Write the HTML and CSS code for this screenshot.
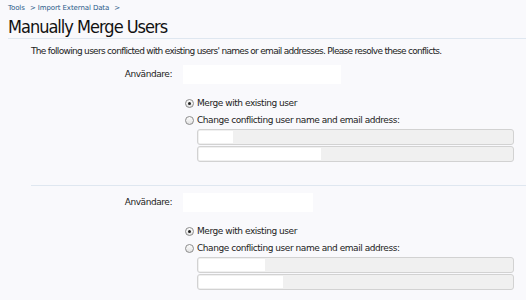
FILE: index.html
```
<!DOCTYPE html>
<html lang="sv">
<head>
  <meta charset="UTF-8" />
  <title>Manually Merge Users</title>
  <link rel="stylesheet" href="styles.css">
</head>
<body>

  <div class="crumbs">
    <a href="#">Tools</a> &gt;
    <a href="#">Import External Data</a> &gt;
  </div>
  <h1 class="title">Manually Merge Users</h1>

  <form class="merge-form">
    <p class="explain">The following users conflicted with existing users' names or email addresses. Please resolve these conflicts.</p>

    <div class="user-block">
      <div class="row">
        <div class="label">Användare:</div>
        <div class="value"><span class="hidden-name" style="width:158px"></span></div>
      </div>
      <ul class="choices">
        <li><label><input type="radio" name="u1" checked> Merge with existing user</label></li>
        <li><label><input type="radio" name="u1"> Change conflicting user name and email address:</label></li>
        <li class="fields">
          <div class="txt"><span class="fill" style="width:34px"></span></div>
          <div class="txt"><span class="fill" style="width:122px"></span></div>
        </li>
      </ul>
    </div>

    <div class="user-block">
      <div class="row">
        <div class="label">Användare:</div>
        <div class="value"><span class="hidden-name" style="width:130px"></span></div>
      </div>
      <ul class="choices">
        <li><label><input type="radio" name="u2" checked> Merge with existing user</label></li>
        <li><label><input type="radio" name="u2"> Change conflicting user name and email address:</label></li>
        <li class="fields">
          <div class="txt"><span class="fill" style="width:66px"></span></div>
          <div class="txt"><span class="fill" style="width:84px"></span></div>
        </li>
      </ul>
    </div>
  </form>

</body>
</html>
```

FILE: styles.css
```
body {
  margin: 0;
  background: #f9f9fc;
  color: #222;
  font-family: "DejaVu Sans", Verdana, sans-serif;
  font-size: 9px;
  letter-spacing: -0.45px;
}
.crumbs {
  padding: 4px 8px 0;
  height: 10px;
  font-size: 7px;
  color: #2b5a8a;
  letter-spacing: -0.1px;
}
.crumbs a {
  color: #2b5a8a;
  text-decoration: none;
  margin-right: 3px;
}
.title {
  margin: 0 0 0 8px;
  font-family: "DejaVu Sans Condensed", "DejaVu Sans", sans-serif;
  font-size: 18px;
  font-weight: normal;
  letter-spacing: -1px;
  color: #111;
  height: 24px;
  line-height: 25px;
  border-bottom: 1px solid #dfe7f0;
}
.merge-form {
  padding-left: 31px;
}
.explain {
  margin: 6px 0 0;
  line-height: 12px;
  letter-spacing: -0.7px;
}
.user-block {
  border-bottom: 1px solid #dfe7f0;
  padding: 8px 0 22px;
}
.user-block + .user-block {
  border-bottom: none;
  padding-top: 7px;
}
.row {
  display: flex;
  align-items: flex-start;
}
.label {
  width: 141px;
  text-align: right;
  padding-top: 4px;
}
.value {
  padding-left: 11px;
}
.hidden-name {
  display: block;
  height: 19px;
  background: #fff;
}
.choices {
  list-style: none;
  margin: 11px 0 0 152px;
  padding: 0;
}
.choices li {
  height: 17px;
  line-height: 17px;
}
.choices label {
  display: flex;
  align-items: center;
  gap: 3px;
}
.choices input {
  appearance: none;
  -webkit-appearance: none;
  margin: 0 0 0 2px;
  width: 9px;
  height: 9px;
  border: 1px solid #8c8c8c;
  border-radius: 50%;
  background: linear-gradient(#fdfdfd, #e2e2e2);
  box-sizing: border-box;
  position: relative;
}
.choices input:checked::after {
  content: "";
  position: absolute;
  left: 2px;
  top: 2px;
  width: 3px;
  height: 3px;
  border-radius: 50%;
  background: #222;
}
.choices .fields {
  height: auto;
  padding: 0 12px 0 14px;
}
.txt {
  height: 12px;
  margin-bottom: 1px;
  background: #f0f0f0;
  border: 1px solid #d2d2d2;
  border-radius: 3px;
  padding: 1px;
}
.fill {
  display: block;
  height: 100%;
  background: #fff;
}
```
